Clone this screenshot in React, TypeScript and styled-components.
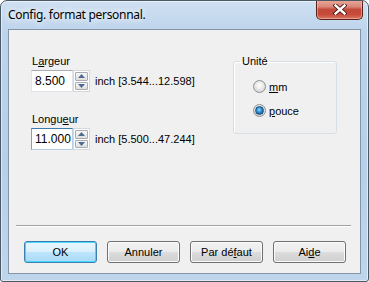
import React from 'react';
import styled, { createGlobalStyle, css } from 'styled-components';

const GlobalStyle = createGlobalStyle`
  html, body {
    margin: 0;
    padding: 0;
    background: #ffffff;
  }
  body {
    font-family: 'Liberation Sans', Arial, sans-serif;
    font-size: 11px;
    color: #000;
  }
  * {
    box-sizing: border-box;
  }
`;

const Window = styled.div`
  width: 369px;
  height: 282px;
  display: flex;
  flex-direction: column;
  border: 1px solid #4b5866;
  border-radius: 7px 7px 3px 3px;
  background: linear-gradient(180deg, #cfe0f2 0%, #bcd3eb 12%, #b7cfe8 60%, #bfd5ec 100%);
  box-shadow: inset 0 0 0 1px rgba(255, 255, 255, 0.55);
  overflow: hidden;
`;

const TitleBar = styled.div`
  height: 28px;
  display: flex;
  justify-content: space-between;
  align-items: flex-start;
`;

const Title = styled.span`
  padding: 6px 0 0 7px;
  font-family: 'Noto Sans', 'Open Sans', sans-serif;
  font-size: 12px;
  line-height: 16px;
  letter-spacing: -0.3px;
  color: #000;
  text-shadow: 0 0 6px rgba(255, 255, 255, 0.95), 0 0 10px rgba(255, 255, 255, 0.8);
`;

const CloseButton = styled.div`
  width: 47px;
  height: 20px;
  margin: -1px 5px 0 0;
  display: flex;
  align-items: center;
  justify-content: center;
  border: 1px solid #5a211c;
  border-top: none;
  border-radius: 0 0 5px 5px;
  background: linear-gradient(180deg, #e9a99a 0%, #d9877a 35%, #c24a3c 50%, #c9493a 75%, #d8765e 100%);
  box-shadow: inset 0 0 0 1px rgba(255, 220, 210, 0.45);
`;

const Client = styled.div`
  flex: 1;
  margin: 0 7px 7px;
  display: flex;
  flex-direction: column;
  border: 1px solid #8395a9;
  background: #f0f0f0;
`;

const TopArea = styled.div`
  display: flex;
  justify-content: space-between;
  padding: 25px 23px 0 22px;
`;

const FieldColumn = styled.div`
  display: flex;
  flex-direction: column;
  gap: 21px;
`;

const Field = styled.div`
  display: flex;
  flex-direction: column;
  gap: 2px;
`;

const Label = styled.span`
  height: 13px;
  line-height: 13px;
  padding-left: 1px;
`;

const FieldRow = styled.div`
  display: flex;
  align-items: center;
  height: 22px;
`;

const TextBox = styled.div<{ $focused?: boolean }>`
  width: 42px;
  height: 22px;
  padding: 0 0 0 3px;
  line-height: 20px;
  font-size: 12px;
  background: #fff;
  border: 1px solid #e2e3ea;
  border-top-color: #abadb3;
  ${({ $focused }) =>
    $focused &&
    css`
      border-color: #b5cfe7;
      border-top-color: #3d7bad;
      border-left-color: #7da2ce;
    `}
`;

const Spin = styled.div`
  width: 17px;
  height: 22px;
  display: flex;
  flex-direction: column;
  gap: 1px;
  padding: 1px;
  border: 1px solid #d4d7db;
  background: #fff;
`;

const SpinHalf = styled.div`
  flex: 1;
  display: flex;
  align-items: center;
  justify-content: center;
  border: 1px solid #a8acb2;
  border-radius: 1px;
  background: linear-gradient(180deg, #f7f7f7 0%, #ececec 50%, #dedede 100%);
`;

const Range = styled.span`
  margin-left: 5px;
  font-size: 11px;
`;

const GroupBox = styled.fieldset`
  width: 104px;
  height: 79px;
  margin: 0;
  padding: 0;
  border: 1px solid #d5dfe5;
  border-radius: 3px;
  box-shadow: inset 1px 1px 0 #ffffff;
`;

const Legend = styled.legend`
  margin-left: 6px;
  padding: 0 2px;
  line-height: 13px;
  font-size: 11px;
`;

const RadioList = styled.div`
  margin: 12px 0 0 19px;
  display: flex;
  flex-direction: column;
  gap: 11px;
`;

const RadioRow = styled.div`
  display: flex;
  align-items: center;
  height: 13px;
  gap: 3px;
`;

const RadioCircle = styled.span<{ $checked?: boolean }>`
  width: 13px;
  height: 13px;
  display: flex;
  align-items: center;
  justify-content: center;
  border-radius: 50%;
  border: 1px solid #8e8f8f;
  background: radial-gradient(circle at 50% 40%, #ffffff 0%, #e9e9e9 45%, #c9c9c9 100%);

  &::after {
    content: '';
    display: ${({ $checked }) => ($checked ? 'block' : 'none')};
    width: 7px;
    height: 7px;
    border-radius: 50%;
    border: 1px solid #1a4d7a;
    background: radial-gradient(circle at 45% 40%, #8fe0ff 0%, #2a8ad0 45%, #0c4a87 100%);
  }
`;

const Separator = styled.div`
  margin: auto 9px 0 7px;
  height: 2px;
  border-top: 1px solid #a0a0a0;
  border-bottom: 1px solid #ffffff;
`;

const ButtonRow = styled.div`
  display: flex;
  gap: 10px;
  padding: 14px 0 10px 15px;
`;

const Button = styled.div<{ $default?: boolean }>`
  width: 73px;
  height: 22px;
  display: flex;
  align-items: center;
  justify-content: center;
  border: 1px solid #707070;
  border-radius: 3px;
  background: linear-gradient(180deg, #f2f2f2 0%, #ebebeb 49%, #dddddd 50%, #cfcfcf 100%);
  box-shadow: inset 0 0 0 1px #fcfcfc;
  font-size: 11px;
  ${({ $default }) =>
    $default &&
    css`
      border-color: #3c7fb1;
      background: linear-gradient(180deg, #eaf6fd 0%, #d9f0fc 49%, #bee6fd 50%, #a7d9f5 100%);
      box-shadow: inset 0 0 0 1px #48d8fb;
    `}
`;

const Arrow = ({ down }: { down?: boolean }) => (
  <svg width="7" height="4" viewBox="0 0 7 4">
    <path d={down ? 'M0 0 H7 L3.5 4 Z' : 'M0 4 H7 L3.5 0 Z'} fill="#4e6a93" />
  </svg>
);

const CloseGlyph = () => (
  <svg width="14" height="11" viewBox="0 0 14 11">
    <path d="M2.5 1.5 L11.5 9.5 M11.5 1.5 L2.5 9.5" stroke="#4b1510" strokeWidth="4.2" strokeLinecap="square" />
    <path d="M2.5 1.5 L11.5 9.5 M11.5 1.5 L2.5 9.5" stroke="#ffffff" strokeWidth="2.4" strokeLinecap="square" />
  </svg>
);

const fields = [
  { label: <>L<u>a</u>rgeur</>, value: '8.500', range: 'inch [3.544...12.598]' },
  { label: <>Longu<u>e</u>ur</>, value: '11.000', range: 'inch [5.500...47.244]', focused: true },
];

const buttons = [
  { label: <>OK</>, isDefault: true },
  { label: <>Annuler</> },
  { label: <>Par dé<u>f</u>aut</> },
  { label: <>Ai<u>d</u>e</> },
];

const App: React.FC = () => (
  <>
    <GlobalStyle />
    <Window>
      <TitleBar>
        <Title>Config. format personnal.</Title>
        <CloseButton>
          <CloseGlyph />
        </CloseButton>
      </TitleBar>
      <Client>
        <TopArea>
          <FieldColumn>
            {fields.map((field, index) => (
              <Field key={index}>
                <Label>{field.label}</Label>
                <FieldRow>
                  <TextBox $focused={field.focused}>{field.value}</TextBox>
                  <Spin>
                    <SpinHalf>
                      <Arrow />
                    </SpinHalf>
                    <SpinHalf>
                      <Arrow down />
                    </SpinHalf>
                  </Spin>
                  <Range>{field.range}</Range>
                </FieldRow>
              </Field>
            ))}
          </FieldColumn>
          <GroupBox>
            <Legend>Unité</Legend>
            <RadioList>
              <RadioRow>
                <RadioCircle />
                <span><u>m</u>m</span>
              </RadioRow>
              <RadioRow>
                <RadioCircle $checked />
                <span><u>p</u>ouce</span>
              </RadioRow>
            </RadioList>
          </GroupBox>
        </TopArea>
        <Separator />
        <ButtonRow>
          {buttons.map((button, index) => (
            <Button key={index} $default={button.isDefault}>
              {button.label}
            </Button>
          ))}
        </ButtonRow>
      </Client>
    </Window>
  </>
);

export default App;
